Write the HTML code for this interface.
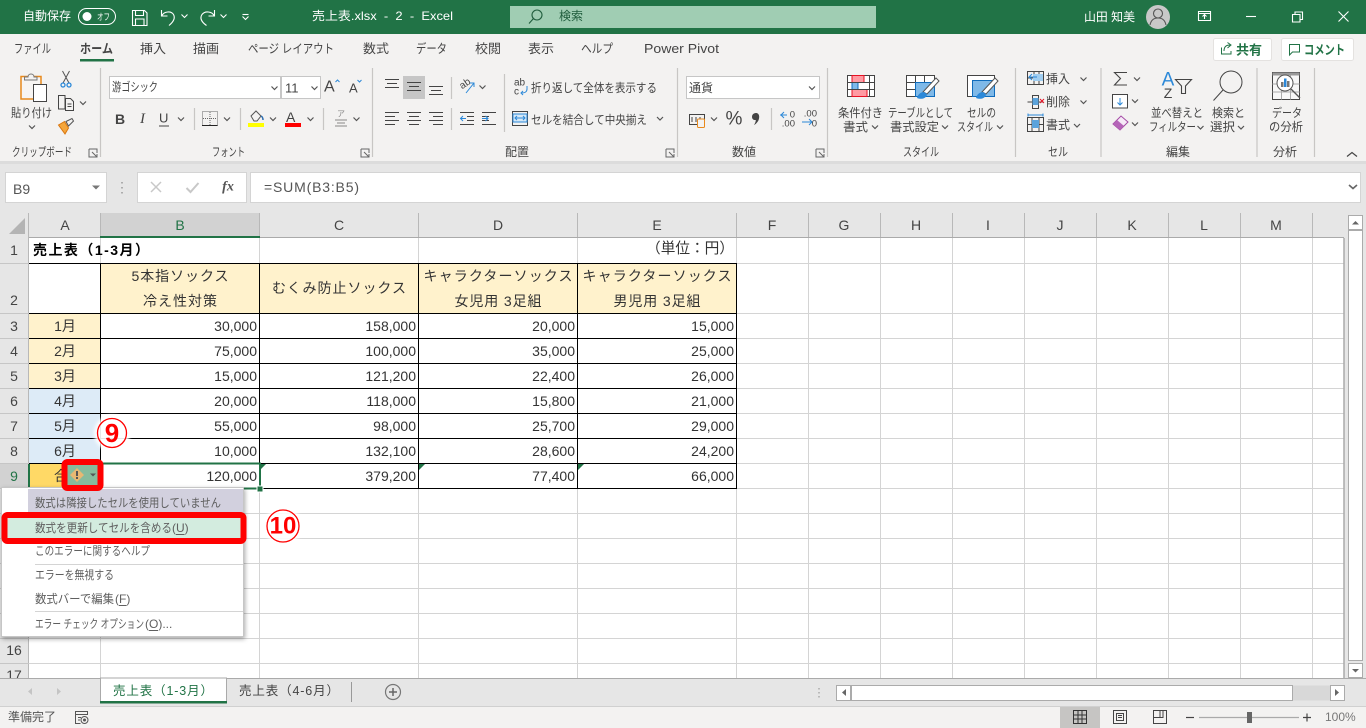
<!DOCTYPE html>
<html lang="ja"><head><meta charset="utf-8"><title>売上表.xlsx - Excel</title>
<style>
html,body{margin:0;padding:0;width:1366px;height:728px;overflow:hidden;background:#e6e6e6}
svg{display:block;position:absolute;left:0;top:0}
text{font-family:"Liberation Sans","Noto Sans CJK JP",sans-serif;dominant-baseline:central;white-space:pre}
.r text{font-size:12px;fill:#444}
.w text{fill:#fff;font-size:12px}
.g text{font-size:14px;fill:#333}
.h text{font-size:14px;fill:#444;text-anchor:middle}
.c{text-anchor:middle}.e{text-anchor:end}
.i{fill:none;stroke:#444;stroke-width:1}
.m text{font-size:12px;fill:#5f5f5f}
</style></head><body>
<svg width="1366" height="728" viewBox="0 0 1366 728" xmlns="http://www.w3.org/2000/svg">
<defs>
<path id="c" d="M-3-1.5L0 1.5L3-1.5" fill="none" stroke="#555" stroke-width="1.2"/>
<path id="cw" d="M-3-1.5L0 1.5L3-1.5" fill="none" stroke="#fff" stroke-width="1.1"/>
<path id="l" d="M-4-4V4H4M-1-1L4 4M4 1V4H1M-4-4H4V-0" fill="none" stroke="#666" stroke-width="1"/>
<filter id="sh" x="-10%" y="-10%" width="120%" height="120%"><feDropShadow dx="1" dy="2" stdDeviation="2.5" flood-color="#000" flood-opacity=".35"/></filter>
<filter id="gl" x="-30%" y="-30%" width="160%" height="160%"><feGaussianBlur stdDeviation="1.5"/></filter>
</defs>

<!-- base backgrounds -->
<rect width="1366" height="728" fill="#e6e6e6"/>
<rect width="1366" height="34" fill="#217346"/>
<rect y="34" width="1366" height="127" fill="#f3f2f1"/>
<rect y="161" width="1366" height="3" fill="#dcdcdc"/>

<!-- title bar -->
<g class="w">
<text x="23" y="16" textLength="48" lengthAdjust="spacingAndGlyphs">自動保存</text>
<rect x="78.5" y="8.5" width="37" height="16" rx="8" fill="none" stroke="#fff"/>
<circle cx="87" cy="16.5" r="4.5" fill="#fff"/>
<text x="97" y="17" style="font-size:9px" textLength="13" lengthAdjust="spacingAndGlyphs">オフ</text>
<g fill="none" stroke="#fff" stroke-width="1.1">
<path d="M132.5 10.5h12l2.5 2.5v12.500h-14.500zM135.500 10.500v5h8v-5M135.500 25.500v-6.500h8.500v6.500"/>
<path d="M161.500 10v6h6M162 15.500C164 11.500 171 10.500 173.500 14.500C176 19 172 23 169 25.500"/>
<path d="M214.500 10v6h-6M214 15.500C212 11.500 205 10.500 202 14.500C199 19 203 23 206.500 25.500"/>
<path d="M242.500 14.500h6"/>
</g>
<use href="#cw" x="184.500" y="16"/><use href="#cw" x="223.500" y="16"/><use href="#cw" x="245.500" y="18"/>
<text x="312" y="16" textLength="141" lengthAdjust="spacingAndGlyphs">売上表.xlsx  -  2  -  Excel</text>
<text x="1084" y="17" textLength="51" lengthAdjust="spacingAndGlyphs">山田 知美</text>
</g>
<rect x="510" y="6" width="366" height="22" fill="#a0cdb3"/>
<g fill="none" stroke="#1f5c3c" stroke-width="1.1"><circle cx="537" cy="15" r="5"/><path d="M533.500 18.500L529 23.500"/></g>
<text x="559" y="16" fill="#1f5c3c" font-size="12" textLength="24" lengthAdjust="spacingAndGlyphs">検索</text>
<circle cx="1158" cy="17" r="12" fill="#c8c8c8"/>
<g fill="none" stroke="#555" stroke-width="1.1"><circle cx="1158" cy="13.500" r="4.500"/><path d="M1150 25c1-5 4-7 8-7s7 2 8 7"/></g>
<g fill="none" stroke="#fff" stroke-width="1.1">
<path d="M1198.500 11.500h12v9h-12zM1198.500 13.500h12M1204.500 19v-4M1202.500 16.500l2-2 2 2"/>
<path d="M1246 16.500h10"/>
<path d="M1292.500 14.500h7.500v7.500h-7.500zM1295 14.500v-2.500h7.500v7.500h-2.500"/>
<path d="M1338.500 11.500l10 10M1348.500 11.500l-10 10"/>
</g>

<!-- tabs -->
<g class="r" style="font-size:12px">
<text x="14" y="49" textLength="37" lengthAdjust="spacingAndGlyphs" style="font-size:12.500px">ファイル</text>
<text x="80" y="49" textLength="33" lengthAdjust="spacingAndGlyphs" style="font-size:12.500px;font-weight:bold">ホーム</text>
<text x="140" y="49" textLength="26" lengthAdjust="spacingAndGlyphs" style="font-size:12.500px">挿入</text>
<text x="193" y="49" textLength="26" lengthAdjust="spacingAndGlyphs" style="font-size:12.500px">描画</text>
<text x="248" y="49" textLength="86" lengthAdjust="spacingAndGlyphs" style="font-size:12.500px">ページ レイアウト</text>
<text x="363" y="49" textLength="26" lengthAdjust="spacingAndGlyphs" style="font-size:12.500px">数式</text>
<text x="416" y="49" textLength="31" lengthAdjust="spacingAndGlyphs" style="font-size:12.500px">データ</text>
<text x="475" y="49" textLength="26" lengthAdjust="spacingAndGlyphs" style="font-size:12.500px">校閲</text>
<text x="528" y="49" textLength="26" lengthAdjust="spacingAndGlyphs" style="font-size:12.500px">表示</text>
<text x="581" y="49" textLength="32" lengthAdjust="spacingAndGlyphs" style="font-size:12.500px">ヘルプ</text>
<text x="644" y="49" textLength="75" lengthAdjust="spacingAndGlyphs" style="font-size:12.500px">Power Pivot</text>
</g>
<rect x="80" y="59" width="34" height="2.500" fill="#217346"/>
<rect x="1213.500" y="38.500" width="58" height="22" rx="2" fill="#fff" stroke="#e4e2e0"/>
<rect x="1281.500" y="38.500" width="72" height="22" rx="2" fill="#fff" stroke="#e4e2e0"/>
<g fill="none" stroke="#217346" stroke-width="1"><path d="M1221.500 47.500v6.500h9.500v-3M1224 51c0-4 2-6 6-6M1227.500 42.500l3.500 2.500-3.500 3"/><path d="M1289.500 44.500h10v7.500h-7l-3 3z"/></g>
<text x="1236" y="50" font-size="13" font-weight="bold" fill="#217346" textLength="26" lengthAdjust="spacingAndGlyphs">共有</text>
<text x="1304" y="50" font-size="13" font-weight="bold" fill="#217346" textLength="41" lengthAdjust="spacingAndGlyphs">コメント</text>

<!-- ribbon separators -->
<g stroke="#c8c6c4" stroke-width="1.200">
<path d="M100.500 68v89M372.500 68v89M677.500 68v89M827.500 68v89M1015.500 68v89M1101 68v89M1257 68v89M1314.500 68v89"/>
<path d="M194.500 108v22M240.500 108v22M323.500 108v22M451.500 77v22M451.500 108v22M504.500 74v58M771.500 108v22"/>
</g>

<!-- group labels -->
<g class="r">
<text x="12" y="152" textLength="60" lengthAdjust="spacingAndGlyphs">クリップボード</text>
<text x="212" y="152" textLength="33" lengthAdjust="spacingAndGlyphs">フォント</text>
<text x="505" y="152" textLength="24" lengthAdjust="spacingAndGlyphs">配置</text>
<text x="732" y="152" textLength="24" lengthAdjust="spacingAndGlyphs">数値</text>
<text x="903" y="152" textLength="36" lengthAdjust="spacingAndGlyphs">スタイル</text>
<text x="1048" y="152" textLength="20" lengthAdjust="spacingAndGlyphs">セル</text>
<text x="1166" y="152" textLength="24" lengthAdjust="spacingAndGlyphs">編集</text>
<text x="1273" y="152" textLength="24" lengthAdjust="spacingAndGlyphs">分析</text>
</g>
<use href="#l" x="93" y="153"/><use href="#l" x="365" y="153"/><use href="#l" x="670" y="153"/><use href="#l" x="820" y="153"/>
<path d="M1347 156.500l5-4 5 4" fill="none" stroke="#444" stroke-width="1.200"/>

<!-- clipboard -->
<rect x="21" y="76.500" width="20" height="22.500" fill="#f7f5f3" stroke="#e8891c" stroke-width="1.500"/>
<path d="M24.500 80v-3h3.500c0-4 6-4 6 0h3v3z" fill="#f3f2f1" stroke="#777"/>
<rect x="33.500" y="84.500" width="13" height="17" fill="#fff" stroke="#444"/>
<g class="r"><text x="11" y="113" textLength="41" lengthAdjust="spacingAndGlyphs">貼り付け</text></g>
<use href="#c" x="32" y="127"/>
<g fill="none" stroke-width="1"><path d="M62.500 71l6.500 12M69.500 71l-6.500 12" stroke="#555"/><circle cx="63" cy="85" r="2" stroke="#2b88d8" stroke-width="1.300"/><circle cx="69" cy="85" r="2" stroke="#2b88d8" stroke-width="1.300"/></g>
<path d="M58.500 95.500h6.500v13.500h-6.500zM65.500 98.500h5l3 3v9h-8zM67.500 104h4M67.500 106.500h4" class="i" style="fill:#f3f2f1"/>
<use href="#c" x="83" y="103"/>
<path d="M58.500 125l6-3.500 4 6.500-3.500 6z" fill="#f4a63c" stroke="#d9760f"/><path d="M66 121.500l6-3 1.500 2.500-5 5z" fill="#f3f2f1" stroke="#555"/>

<!-- font -->
<rect x="109.500" y="76.500" width="171" height="22" fill="#fff" stroke="#c6c6c6"/>
<rect x="281.500" y="76.500" width="39" height="22" fill="#fff" stroke="#c6c6c6"/>
<g class="r"><text x="112" y="87" textLength="46" lengthAdjust="spacingAndGlyphs">游ゴシック</text><text x="285" y="88" style="font-size:13px">11</text></g>
<use href="#c" x="274.500" y="88"/><use href="#c" x="314.500" y="88"/>
<text x="324" y="87" font-size="16" fill="#444">A</text><text x="349" y="88" font-size="13" fill="#444">A</text>
<path d="M335.500 82l2-2 2 2" fill="none" stroke="#2b88d8"/><path d="M357.500 80l2 2 2-2" fill="none" stroke="#2b88d8"/>
<text x="115" y="119" font-size="14" font-weight="bold" fill="#444">B</text>
<text x="140" y="119" fill="#444" style="font-family:'Liberation Serif',serif;font-size:15px;font-style:italic">I</text>
<text x="159" y="118" font-size="13" fill="#444">U</text><path d="M159 126h10" stroke="#444"/>
<use href="#c" x="181" y="119"/>
<path d="M202.500 111.500h15v14h-15zM210 112v13M203 118.500h14" fill="none" stroke="#666" stroke-dasharray="1 1"/><path d="M202 125.500h15.500" stroke="#222"/>
<use href="#c" x="227" y="119"/>
<path d="M251 116l5-5 5 5-4 5h-3z" fill="none" stroke="#555"/><path d="M261 116c2 1 2 3 2 4" stroke="#2b6cb0" fill="none" stroke-width="1.500"/>
<rect x="248" y="123" width="16" height="4" fill="#ff0"/>
<use href="#c" x="273" y="119"/>
<text x="286" y="117" font-size="14" fill="#444">A</text><rect x="285" y="123" width="16" height="4" fill="#f00"/>
<use href="#c" x="310.500" y="119"/>
<text x="341" y="114" font-size="8" fill="#888" class="c">ア</text><path d="M335 120h12M337 123h8M335 126h12" stroke="#888"/>
<use href="#c" x="356.500" y="119"/>

<!-- alignment -->
<rect x="403" y="76" width="22" height="23" fill="#c6c6c6"/>
<g stroke="#444" stroke-width="1">
<path d="M385 79.500h14M387 83.500h10M385 87.500h14"/>
<path d="M407 82.500h14M409 86.500h10M407 90.500h14"/>
<path d="M429 86.500h14M431 90.500h10M429 94.500h14"/>
<path d="M385 112.500h14M385 116.500h10M385 120.500h14M385 124.500h10"/>
<path d="M407 112.500h14M409 116.500h10M407 120.500h14M409 124.500h10"/>
<path d="M429 112.500h14M433 116.500h10M429 120.500h14M433 124.500h10"/>
<path d="M460 112.500h14M467 116.500h7M467 120.500h7M460 124.500h14"/>
<path d="M482 112.500h14M482 116.500h7M482 120.500h7M482 124.500h14"/>
</g>
<path d="M466 118.500h-5.500m2.500-2.500l-2.500 2.500 2.500 2.500M482 118.500h6m-2.500-2.500l2.500 2.500-2.500 2.500" fill="none" stroke="#2b88d8"/>
<text x="460" y="85" font-size="10" fill="#444" transform="rotate(-35 464 85)">ab</text><path d="M466 93l8-10m-4 0h4v4" fill="none" stroke="#2b88d8"/>
<use href="#c" x="482.500" y="87"/>
<text x="514" y="83" font-size="10" fill="#444">ab</text><text x="514" y="92" font-size="10" fill="#444">c</text><path d="M527 86v3c0 3-2 4-6 4m2-2l-2 2 2 2" fill="none" stroke="#2b88d8"/>
<g class="r"><text x="531" y="88" textLength="126" lengthAdjust="spacingAndGlyphs">折り返して全体を表示する</text>
<text x="531" y="120" textLength="116" lengthAdjust="spacingAndGlyphs">セルを結合して中央揃え</text></g>
<rect x="512.500" y="111.500" width="15" height="14" fill="none" stroke="#444"/><rect x="513" y="114" width="14" height="8" fill="#d5e8f7" stroke="#2b88d8"/><path d="M515 118h10m-8-2l-2 2 2 2m6-4l2 2-2 2" fill="none" stroke="#2b88d8"/>
<use href="#c" x="660" y="118.500"/>

<!-- number -->
<rect x="686.500" y="76.500" width="133" height="22" fill="#fff" stroke="#c6c6c6"/>
<g class="r"><text x="689" y="88" textLength="24" lengthAdjust="spacingAndGlyphs">通貨</text></g>
<use href="#c" x="812" y="88"/>
<rect x="689.500" y="114.500" width="15" height="10" fill="none" stroke="#444"/><path d="M692 117v5M696 117v5M700 117v5" stroke="#444"/><rect x="697.500" y="119" width="7" height="8.500" rx="1" fill="#f3f2f1" stroke="#e8891c"/>
<use href="#c" x="714" y="119"/>
<text x="734" y="119" font-size="19" fill="#444" class="c">%</text>
<path d="M754 113.500c2.500-1.200 5.200 0 5.200 3.200c0 3.500-2 6.500-5.200 8.300c1.200-2 1.800-3.500 1.800-5c-2 .3-3.800-.8-3.800-3.300c0-1.500.8-2.600 2-3.200z" fill="#444"/>
<path d="M780 115h7m-3-3l-3 3 3 3" fill="none" stroke="#2b88d8"/><text x="795" y="115" font-size="9.500" fill="#444" class="e">0</text><text x="795" y="124" font-size="9.500" fill="#444" class="e">.00</text>
<path d="M802 122h10m-3-3l3 3-3 3" fill="none" stroke="#2b88d8"/><text x="817" y="114" font-size="9.500" fill="#444" class="e">.00</text><text x="817" y="124" font-size="9.500" fill="#444" class="e">0</text>

<!-- styles -->
<rect x="847.500" y="75.500" width="27" height="21" fill="#fff" stroke="#444"/>
<rect x="852" y="75.500" width="12" height="7" fill="#ff9aa2" stroke="#e81123"/><rect x="852" y="82.500" width="6" height="7" fill="#7fb9e8" stroke="#0f6cbd"/><rect x="852" y="89.500" width="15" height="7" fill="#ff9aa2" stroke="#e81123"/>
<path d="M847.500 82.500h27M847.500 89.500h27M869.500 75.500v21" stroke="#444" fill="none"/>
<rect x="906.500" y="75.500" width="28" height="21" fill="#fff" stroke="#444"/><path d="M906.500 82.500h28M906.500 89.500h28M915.500 75.500v21M924.500 75.500v21" stroke="#444"/>
<rect x="915.500" y="82.500" width="19" height="14" fill="#7fb9e8" stroke="#0f6cbd"/>
<path d="M923 92l13-14 3 3-12 13z" fill="#fff" stroke="#555"/><path d="M917 98c1-4 4-6 7-6l3 2c0 4-5 6-10 4z" fill="#2b88d8"/>
<rect x="967.500" y="75.500" width="27" height="21" fill="#fff" stroke="#444"/><rect x="972.500" y="80.500" width="22" height="16" fill="#7fb9e8" stroke="#0f6cbd"/>
<path d="M982 92l13-14 3 3-12 13z" fill="#fff" stroke="#555"/><path d="M976 98c1-4 4-6 7-6l3 2c0 4-5 6-10 4z" fill="#2b88d8"/>
<g class="r">
<text x="838" y="113" textLength="45" lengthAdjust="spacingAndGlyphs">条件付き</text>
<text x="843" y="127" textLength="25" lengthAdjust="spacingAndGlyphs">書式</text>
<text x="888" y="113" textLength="65" lengthAdjust="spacingAndGlyphs">テーブルとして</text>
<text x="890" y="127" textLength="49" lengthAdjust="spacingAndGlyphs">書式設定</text>
<text x="967" y="113" textLength="29" lengthAdjust="spacingAndGlyphs">セルの</text>
<text x="957" y="127" textLength="36" lengthAdjust="spacingAndGlyphs">スタイル</text>
</g>
<use href="#c" x="875" y="127"/><use href="#c" x="945" y="127"/><use href="#c" x="1000" y="127"/>

<!-- cells -->
<g fill="none" stroke="#444">
<path d="M1027.500 71.500h16v13h-16zM1027.500 78h16M1034 71.500v13M1039 71.500v13"/>
<path d="M1027.500 102h16M1032.500 95.500h6v13h-6z"/>
<path d="M1027.500 117.500h16v14h-16zM1027.500 124.500h16M1032 117.500v14M1039 117.500v14"/>
</g>
<rect x="1033" y="74" width="10" height="7" fill="#9fcdf0"/><path d="M1037 77h-8m3-3l-3 3 3 3" fill="none" stroke="#2b88d8"/>
<rect x="1032.500" y="98" width="6" height="7" fill="#5ba3db"/><path d="M1040 99l4 4M1044 99l-4 4" stroke="#e81123"/>
<rect x="1032" y="120" width="7" height="8" fill="#5ba3db"/><path d="M1027.500 115h16M1028 113.500v3M1043 113.500v3" stroke="#2b88d8" fill="none"/>
<g class="r"><text x="1046" y="79" textLength="24" lengthAdjust="spacingAndGlyphs">挿入</text><text x="1046" y="102" textLength="24" lengthAdjust="spacingAndGlyphs">削除</text><text x="1046" y="125" textLength="24" lengthAdjust="spacingAndGlyphs">書式</text></g>
<use href="#c" x="1083.500" y="79"/><use href="#c" x="1083.500" y="102"/><use href="#c" x="1077" y="125.500"/>

<!-- editing -->
<path d="M1127 72.500h-12.500l6 6-6 6.500h12.500" fill="none" stroke="#444" stroke-width="1.100"/>
<use href="#c" x="1137" y="79"/>
<rect x="1112.500" y="94.500" width="15" height="13.500" fill="#fff" stroke="#444"/><path d="M1120 98v7m-2.500-2.500l2.500 2.500 2.500-2.500" fill="none" stroke="#2b88d8"/>
<use href="#c" x="1135" y="101"/>
<path d="M1113 124l8-8 7 6-8 8z" fill="#f6eaf7" stroke="#a349a4"/><path d="M1113 124l4-4 7 6-4 4z" fill="#b565b8"/>
<use href="#c" x="1135" y="124"/>
<text x="1168" y="80" font-size="19" fill="#2b88d8" class="c">A</text><text x="1168" y="93" font-size="14" fill="#444" class="c">Z</text>
<path d="M1175.500 79.500h16l-6 6.500v7.500h-4v-7.500z" fill="none" stroke="#444" stroke-width="1.100"/>
<circle cx="1231" cy="82" r="11" fill="none" stroke="#444"/><path d="M1223 90l-9.500 10.500" stroke="#444"/>
<g class="r">
<text x="1151" y="113" textLength="52" lengthAdjust="spacingAndGlyphs">並べ替えと</text>
<text x="1149" y="127" textLength="47" lengthAdjust="spacingAndGlyphs">フィルター</text>
<text x="1212" y="113" textLength="33" lengthAdjust="spacingAndGlyphs">検索と</text>
<text x="1210" y="127" textLength="25" lengthAdjust="spacingAndGlyphs">選択</text>
<text x="1272" y="113" textLength="30" lengthAdjust="spacingAndGlyphs">データ</text>
<text x="1269" y="127" textLength="34" lengthAdjust="spacingAndGlyphs">の分析</text>
</g>
<use href="#c" x="1200.500" y="127.500"/><use href="#c" x="1241" y="127.500"/>
<!-- analysis -->
<rect x="1272.500" y="72.500" width="27" height="27" fill="#f7f7f7" stroke="#444"/><rect x="1272.500" y="72.500" width="27" height="3" fill="#999"/>
<path d="M1272.500 84h27M1272.500 92h27M1281.500 75.500v24M1290.500 75.500v24" stroke="#aaa"/>
<circle cx="1285" cy="83" r="8" fill="#fff" stroke="#555"/><path d="M1291 89l9 9" stroke="#555" stroke-width="1.300"/>
<rect x="1281" y="82" width="2.500" height="5" fill="#777"/><rect x="1284" y="78.500" width="2.500" height="8.500" fill="#2b88d8"/><rect x="1287" y="81" width="2.500" height="6" fill="#777"/>

<!-- formula bar -->
<rect x="5.500" y="172.500" width="101" height="30" fill="#fff" stroke="#d4d4d4"/>
<text x="13" y="189" font-size="14" fill="#555">B9</text>
<path d="M92 185.500h8l-4 4z" fill="#777"/>
<path d="M122 182v1.500M122 187v1.500M122 192v1.500" stroke="#999" stroke-width="1.500"/>
<rect x="137.500" y="172.500" width="109" height="30" fill="#fff" stroke="#d4d4d4"/>
<path d="M151 182l10 10M161 182l-10 10" stroke="#c8c8c8" stroke-width="1.500"/>
<path d="M186.500 188l4 4 8-9" fill="none" stroke="#c8c8c8" stroke-width="2"/>
<text x="228" y="187" fill="#555" class="c" style="font-family:'Liberation Serif',serif;font-size:14px;font-style:italic;font-weight:bold">fx</text>
<rect x="250.500" y="172.500" width="1110" height="30" fill="#fff" stroke="#d4d4d4"/>
<text x="264" y="187" font-size="14" fill="#555" textLength="95" lengthAdjust="spacing">=SUM(B3:B5)</text>
<path d="M1349 185l4 3.500 4-3.500" fill="none" stroke="#666" stroke-width="1.600"/>

<!-- headers -->
<rect x="0" y="213" width="1344" height="25" fill="#e6e6e6"/>
<rect x="101" y="213" width="159" height="24" fill="#d2d2d2"/>
<rect x="0" y="238" width="29" height="440" fill="#e6e6e6"/>
<rect x="0" y="464" width="29" height="25" fill="#d2d2d2"/>
<path d="M25 218v16h-16z" fill="#b4b4b4"/>
<path d="M28.500 213v465M100.500 213v24M259.500 213v24M418.500 213v24M577.500 213v24M736.500 213v24M808.500 213v24M880.500 213v24M952.500 213v24M1024.500 213v24M1096.500 213v24M1168.500 213v24M1240.500 213v24M1312.500 213v24" stroke="#b8b8b8"/>
<path d="M0 263.500h29M0 313.500h29M0 338.500h29M0 363.500h29M0 388.500h29M0 413.500h29M0 438.500h29M0 463.500h29M0 488.500h29M0 513.500h29M0 538.500h29M0 563.500h29M0 588.500h29M0 613.500h29M0 638.500h29M0 663.500h29" stroke="#c6c6c6"/>
<g class="h">
<text x="65" y="225">A</text><text x="180" y="225" fill="#217346" style="fill:#217346">B</text><text x="339" y="225">C</text><text x="498" y="225">D</text><text x="657" y="225">E</text><text x="772" y="225">F</text><text x="844" y="225">G</text><text x="916" y="225">H</text><text x="988" y="225">I</text><text x="1060" y="225">J</text><text x="1132" y="225">K</text><text x="1204" y="225">L</text><text x="1276" y="225">M</text>
<text x="14" y="250">1</text><text x="14" y="300">2</text><text x="14" y="326">3</text><text x="14" y="351">4</text><text x="14" y="376">5</text><text x="14" y="401">6</text><text x="14" y="426">7</text><text x="14" y="451">8</text><text x="14" y="476" style="fill:#217346">9</text><text x="14" y="501">10</text><text x="14" y="526">11</text><text x="14" y="551">12</text><text x="14" y="576">13</text><text x="14" y="601">14</text><text x="14" y="626">15</text><text x="14" y="650">16</text><text x="14" y="675">17</text>
</g>

<!-- grid -->
<rect x="29" y="238" width="1315" height="440" fill="#fff"/>
<path d="M100.500 238v440M259.500 238v440M418.500 238v440M577.500 238v440M736.500 238v440M808.500 238v440M880.500 238v440M952.500 238v440M1024.500 238v440M1096.500 238v440M1168.500 238v440M1240.500 238v440M1312.500 238v440" stroke="#d4d4d4"/>
<path d="M29 263.500h1315M29 313.500h1315M29 338.500h1315M29 363.500h1315M29 388.500h1315M29 413.500h1315M29 438.500h1315M29 463.500h1315M29 488.500h1315M29 513.500h1315M29 538.500h1315M29 563.500h1315M29 588.500h1315M29 613.500h1315M29 638.500h1315M29 663.500h1315" stroke="#d4d4d4"/>
<path d="M1344 238v440" stroke="#aaa" stroke-width="1.500"/>
<rect x="29" y="237" width="1315" height="1" fill="#aaa"/>
<rect x="101" y="264" width="636" height="50" fill="#fff2cc"/>
<rect x="29" y="314" width="72" height="75" fill="#fff2cc"/>
<rect x="29" y="389" width="72" height="75" fill="#ddebf7"/>
<rect x="29" y="464" width="72" height="25" fill="#ffd966"/>
<path d="M29 263.500h708M29 313.500h708M29 338.500h708M29 363.500h708M29 388.500h708M29 413.500h708M29 438.500h708M29 463.500h708M29 488.500h708M100.500 263v226M259.500 263v226M418.500 263v226M577.500 263v226M736.500 263v226" stroke="#000"/>
<g class="g">
<text x="33" y="250" textLength="116" lengthAdjust="spacing" style="font-weight:bold;fill:#000">売上表（1-3月）</text>
<text x="734" y="249" class="e" style="font-size:14.670px">（単位：円）</text>
<text x="180" y="276" class="c" textLength="97" lengthAdjust="spacing">5本指ソックス</text>
<text x="180" y="301" class="c" textLength="74" lengthAdjust="spacing">冷え性対策</text>
<text x="339" y="288" class="c" textLength="134" lengthAdjust="spacing">むくみ防止ソックス</text>
<text x="498" y="276" class="c" textLength="149" lengthAdjust="spacing">キャラクターソックス</text>
<text x="498" y="301" class="c" textLength="87" lengthAdjust="spacing">女児用 3足組</text>
<text x="657" y="276" class="c" textLength="149" lengthAdjust="spacing">キャラクターソックス</text>
<text x="657" y="301" class="c" textLength="87" lengthAdjust="spacing">男児用 3足組</text>
<text x="65" y="326" class="c">1月</text><text x="65" y="351" class="c">2月</text><text x="65" y="376" class="c">3月</text><text x="65" y="401" class="c">4月</text><text x="65" y="426" class="c">5月</text><text x="65" y="451" class="c">6月</text><text x="54" y="476">合</text>
<text x="257" y="326" class="e">30,000</text><text x="416" y="326" class="e">158,000</text><text x="575" y="326" class="e">20,000</text><text x="734" y="326" class="e">15,000</text>
<text x="257" y="351" class="e">75,000</text><text x="416" y="351" class="e">100,000</text><text x="575" y="351" class="e">35,000</text><text x="734" y="351" class="e">25,000</text>
<text x="257" y="376" class="e">15,000</text><text x="416" y="376" class="e">121,200</text><text x="575" y="376" class="e">22,400</text><text x="734" y="376" class="e">26,000</text>
<text x="257" y="401" class="e">20,000</text><text x="416" y="401" class="e">118,000</text><text x="575" y="401" class="e">15,800</text><text x="734" y="401" class="e">21,000</text>
<text x="257" y="426" class="e">55,000</text><text x="416" y="426" class="e">98,000</text><text x="575" y="426" class="e">25,700</text><text x="734" y="426" class="e">29,000</text>
<text x="257" y="451" class="e">10,000</text><text x="416" y="451" class="e">132,100</text><text x="575" y="451" class="e">28,600</text><text x="734" y="451" class="e">24,200</text>
<text x="257" y="476" class="e">120,000</text><text x="416" y="476" class="e">379,200</text><text x="575" y="476" class="e">77,400</text><text x="734" y="476" class="e">66,000</text>
</g>
<path d="M260 464h6l-6 6zM419 464h6l-6 6zM578 464h6l-6 6z" fill="#217346"/>
<!-- selection -->
<rect x="101" y="463.500" width="159" height="25" fill="none" stroke="#217346" stroke-width="2"/>
<rect x="257" y="486" width="6" height="6" fill="#217346" stroke="#fff"/>
<rect x="100" y="236" width="160" height="2" fill="#217346"/>
<rect x="28" y="464" width="2" height="25" fill="#217346"/>

<!-- scrollbars -->
<rect x="1348.500" y="215.500" width="14" height="14" fill="#fff" stroke="#ababab"/><path d="M1352 224.500h7l-3.500-3.500z" fill="#666"/>
<rect x="1348.500" y="230.500" width="14" height="430" fill="#fff" stroke="#ababab"/>
<rect x="1348.500" y="663.500" width="14" height="14" fill="#fff" stroke="#ababab"/><path d="M1352 669h7l-3.500 3.500z" fill="#666"/>

<!-- sheet tabs -->
<rect x="0" y="678" width="1366" height="28" fill="#e6e6e6"/><rect x="0" y="678" width="1366" height="1" fill="#aaa"/>
<path d="M32 688v7l-4-3.500zM57 688v7l4-3.500z" fill="#c4c4c4"/>
<rect x="100.500" y="678" width="126" height="25" fill="#fff" stroke="#aaa"/>
<rect x="100" y="701" width="127" height="2.500" fill="#217346"/>
<text x="113" y="691" font-size="12.500" fill="#217346" textLength="100" lengthAdjust="spacing">売上表（1-3月）</text>
<text x="239" y="691" font-size="12.500" fill="#444" textLength="100" lengthAdjust="spacing">売上表（4-6月）</text>
<path d="M351.500 682v20" stroke="#999"/>
<circle cx="393" cy="692" r="7.500" fill="none" stroke="#777" stroke-width="1.200"/><path d="M389 692h8M393 688v8" stroke="#666" stroke-width="1.500"/>
<path d="M819 688v1.500M819 692v1.500M819 696v1.500" stroke="#aaa" stroke-width="1.500"/>
<rect x="851" y="685.500" width="479" height="15" fill="#d8d8d8"/>
<rect x="836.500" y="685.500" width="14" height="15" fill="#fff" stroke="#ababab"/><path d="M846 689v7l-4-3.500z" fill="#666"/>
<rect x="851.500" y="685.500" width="441" height="15" fill="#fff" stroke="#ababab"/>
<rect x="1330.500" y="685.500" width="14" height="15" fill="#fff" stroke="#ababab"/><path d="M1335 689v7l4-3.500z" fill="#666"/>

<!-- status bar -->
<rect x="0" y="706" width="1366" height="22" fill="#f3f2f1"/><rect x="0" y="706" width="1366" height="1" fill="#d0d0d0"/>
<text x="8" y="717" font-size="12" fill="#555" textLength="48" lengthAdjust="spacingAndGlyphs">準備完了</text>
<path d="M75.500 711.500h12v3h-12zM75.500 714.500v9h5M78 717.500h3M78 720h2" fill="none" stroke="#555"/><circle cx="84.500" cy="720" r="3.500" fill="none" stroke="#555"/><circle cx="84.500" cy="720" r="1.500" fill="#555"/>
<rect x="1060" y="707" width="40" height="21" fill="#c6c5c3"/>
<path d="M1073.500 710.500h13v13h-13zM1073.500 715h13M1073.500 719h13M1078 710.500v13M1082 710.500v13" fill="none" stroke="#333"/>
<path d="M1113.500 710.500h13v13h-13zM1116.500 713.500h7v7h-7zM1118 715.500h4M1118 717.500h4" fill="none" stroke="#444"/>
<path d="M1153.500 710.500h13v13h-13zM1153.500 717.500h6.500v-7M1160 710.500v7h3v-7" fill="none" stroke="#444"/>
<path d="M1186 717.500h8" stroke="#444" stroke-width="1.200"/>
<path d="M1199 717.500h100" stroke="#aaa" stroke-width="1.200"/>
<rect x="1247" y="712" width="5" height="11" fill="#666"/>
<path d="M1303 717.500h8M1307 713.500v8" stroke="#444" stroke-width="1.200"/>
<text x="1325" y="717" font-size="12" fill="#777">100%</text>

<!-- error menu -->
<rect x="1.500" y="487.500" width="242" height="149" fill="#fff" stroke="#c6c6c6" filter="url(#sh)"/>
<rect x="28" y="489" width="215" height="25" fill="#d2d0de"/>
<rect x="4" y="514" width="238" height="26" fill="#d3ecdf"/>
<path d="M35 564.500h208M35 611.500h208" stroke="#d4d4d4"/>
<g class="m">
<text x="35" y="503" textLength="186" lengthAdjust="spacingAndGlyphs">数式は隣接したセルを使用していません</text>
<text x="35" y="528" textLength="137" lengthAdjust="spacingAndGlyphs">数式を更新してセルを含める</text>
<text x="172" y="528">(U)</text>
<text x="35" y="551" textLength="115" lengthAdjust="spacingAndGlyphs">このエラーに関するヘルプ</text>
<text x="35" y="575" textLength="79" lengthAdjust="spacingAndGlyphs">エラーを無視する</text>
<text x="35" y="599" textLength="79" lengthAdjust="spacingAndGlyphs">数式バーで編集</text>
<text x="115" y="599">(F)</text>
<text x="35" y="624" textLength="109" lengthAdjust="spacingAndGlyphs">エラー チェック オプション</text>
<text x="145" y="624">(O)...</text>
</g>
<path d="M176 534.500h8.500M119 605.500h7.500M149 630.500h9" stroke="#5f5f5f"/>
<rect x="4.500" y="515" width="239" height="26" rx="3" fill="none" stroke="#f00" stroke-width="6"/>

<!-- smart tag -->
<rect x="64.500" y="462" width="36" height="26" rx="3" fill="#86bb9c" stroke="#f00" stroke-width="6"/>
<path d="M77 468l7 7-7 7-7-7z" fill="#e8b872"/>
<rect x="76" y="471" width="2" height="5" fill="#555"/><rect x="76" y="477" width="2" height="2" fill="#555"/>
<path d="M90 473.500h6l-3 3z" fill="#555"/>

<!-- callouts -->
<circle cx="112" cy="433" r="18" fill="#fff" opacity=".9" filter="url(#gl)"/>
<circle cx="112" cy="433" r="14.500" fill="none" stroke="#f00" stroke-width="1.300"/>
<text x="112" y="433" font-size="26" font-weight="bold" fill="#f00" class="c">9</text>
<circle cx="283" cy="526" r="19" fill="#fff" opacity=".9" filter="url(#gl)"/>
<circle cx="283" cy="526" r="16" fill="none" stroke="#f00" stroke-width="1.300"/>
<text x="283" y="526" font-size="24" font-weight="bold" fill="#f00" class="c">10</text>
</svg>
</body></html>
